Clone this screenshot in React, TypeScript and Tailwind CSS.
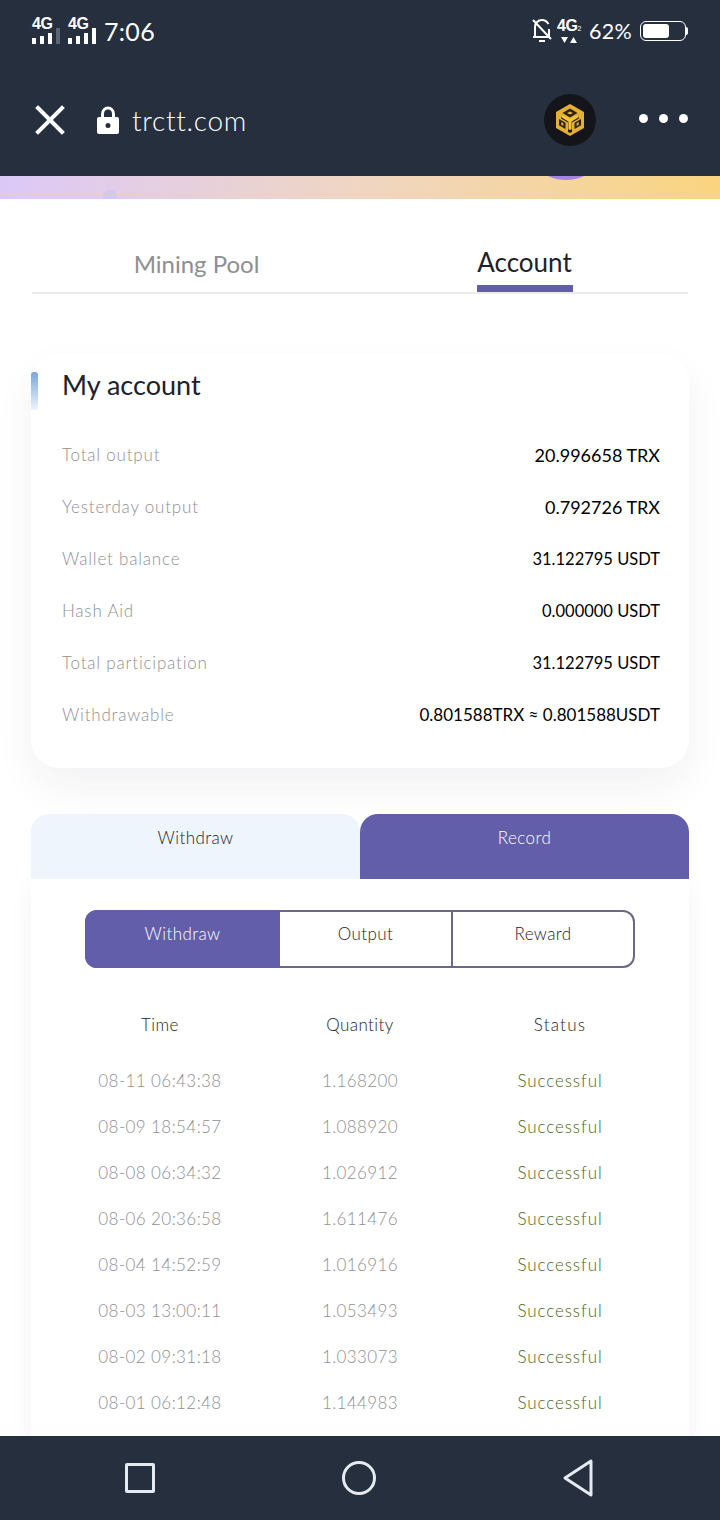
const accountRows = [
  { label: 'Total output', value: '20.996658 TRX', size: 'text-[18px]' },
  { label: 'Yesterday output', value: '0.792726 TRX', size: 'text-[18px]' },
  { label: 'Wallet balance', value: '31.122795 USDT', size: 'text-[16.5px]' },
  { label: 'Hash Aid', value: '0.000000 USDT', size: 'text-[16.5px]' },
  { label: 'Total participation', value: '31.122795 USDT', size: 'text-[16.5px]' },
  { label: 'Withdrawable', value: '0.801588TRX ≈ 0.801588USDT', size: 'text-[17px]' },
]

const records = [
  { time: '08-11 06:43:38', quantity: '1.168200' },
  { time: '08-09 18:54:57', quantity: '1.088920' },
  { time: '08-08 06:34:32', quantity: '1.026912' },
  { time: '08-06 20:36:58', quantity: '1.611476' },
  { time: '08-04 14:52:59', quantity: '1.016916' },
  { time: '08-03 13:00:11', quantity: '1.053493' },
  { time: '08-02 09:31:18', quantity: '1.033073' },
  { time: '08-01 06:12:48', quantity: '1.144983' },
]

function SignalBars({ lastDim }: { lastDim?: boolean }) {
  return (
    <div className="relative w-[28px] h-[26px] flex items-end gap-[4px]">
      <span className="absolute left-0 -top-[1px] text-[16px] leading-[14px] font-bold text-white font-['Liberation_Sans',sans-serif] tracking-[-0.5px]">4G</span>
      <span className="w-[4px] h-[6px] bg-white" />
      <span className="w-[4px] h-[8px] bg-white" />
      <span className="w-[4px] h-[11px] bg-white" />
      <span className={`w-[4px] h-[16px] ${lastDim ? 'bg-[#5b6470]' : 'bg-white'}`} />
    </div>
  )
}

function BnbLogo() {
  return (
    <div className="w-[52px] h-[52px] rounded-full bg-[#14151a] flex items-center justify-center">
      <svg width="34" height="36" viewBox="0 0 34 36" fill="none">
        <path d="M17 2 L31 10 V26 L17 34 L3 26 V10 Z" fill="#e3b032" />
        <path d="M17 6.5 L24.5 11 L17 15.5 L9.5 11 Z" fill="#2a2118" />
        <path d="M17 9.5 L20 11 L17 12.6 L14 11 Z" fill="#e3b032" />
        <path d="M8 14.5 L17 19.5 L26 14.5 V16.5 L19 20.5 V30 L17 31 L15 30 V20.5 L8 16.5 Z" fill="#2a2118" />
        <path d="M11 13.2 L17 16.7 L23 13.2 L26 15 L18.6 19.4 V27 L17 28 L15.4 27 V19.4 L8 15 Z" fill="#f7c52b" />
        <path d="M6 17 L12.5 20.8 V27 L6 23.2 Z M28 17 L21.5 20.8 V27 L28 23.2 Z" fill="#2a2118" />
        <path d="M8.2 20 L10.4 21.3 V24 L8.2 22.7 Z M25.8 20 L23.6 21.3 V24 L25.8 22.7 Z" fill="#e3b032" />
      </svg>
    </div>
  )
}

export default function App() {
  return (
    <div className="w-[720px] h-[1520px] flex flex-col overflow-hidden bg-white font-['Lato',sans-serif]">
      {/* Status bar + browser bar */}
      <div className="h-[176px] shrink-0 bg-[#252f3e] text-white flex flex-col">
        <div className="h-[62px] px-[32px] pt-[17px] flex justify-between items-start">
          <div className="flex items-center gap-[8px]">
            <SignalBars lastDim />
            <SignalBars />
            <span className="text-[25px] leading-[28px] font-normal tracking-[0.3px]">7:06</span>
          </div>
          <div className="flex items-center">
            <svg width="22" height="26" viewBox="0 0 22 26" fill="none" stroke="white" strokeWidth="2" className="mr-[3px]">
              <path d="M4 19 V9 C4 5 7 2 11 2 C14 2 16 3.5 17.5 6 M18 11 V19 H2 M8 23 H14 M2 2 L20 21" />
            </svg>
            <div className="flex flex-col items-center w-[26px] mr-[7px]">
              <span className="text-[16px] leading-[15px] font-bold font-['Liberation_Sans',sans-serif] tracking-[-0.5px]">4G<span className="text-[7px] font-normal">2</span></span>
              <svg width="16" height="8" viewBox="0 0 16 8" fill="white">
                <path d="M0 1 H7 L3.5 7 Z M9 7 H16 L12.5 1 Z" />
              </svg>
            </div>
            <span className="text-[21.5px] leading-[28px] tracking-[0.3px] mr-[8px]">62%</span>
            <div className="w-[46px] h-[20px] rounded-[6px] border border-white p-[2px]">
              <div className="w-[26px] h-full rounded-[3px] bg-white" />
            </div>
            <span className="w-[2px] h-[8px] bg-white rounded-r-full" />
          </div>
        </div>
        <div className="flex-1 pl-[35px] pr-[32px] pt-[2px] flex items-center">
          <svg width="30" height="30" viewBox="0 0 30 30" stroke="white" strokeWidth="4" strokeLinecap="square" className="mr-[32px]">
            <path d="M3 3 L27 27 M27 3 L3 27" />
          </svg>
          <svg width="22" height="28" viewBox="0 0 22 28" className="mr-[13px]">
            <path d="M5.5 12 V8 C5.5 4.5 8 2 11 2 C14 2 16.5 4.5 16.5 8 V12" fill="none" stroke="white" strokeWidth="3" />
            <rect y="11" width="22" height="17" rx="2" fill="white" />
            <circle cx="11" cy="19.5" r="2.5" fill="#252f3e" />
          </svg>
          <span className="text-[28px] leading-[32px] font-light tracking-[0.7px] flex-1">trctt.com</span>
          <div className="mr-[43px]">
            <BnbLogo />
          </div>
          <div className="flex gap-[11px] -mt-[4px]">
            <span className="w-[9px] h-[9px] rounded-full bg-white" />
            <span className="w-[9px] h-[9px] rounded-full bg-white" />
            <span className="w-[9px] h-[9px] rounded-full bg-white" />
          </div>
        </div>
      </div>

      {/* Banner strip */}
      <div className="relative h-[23px] shrink-0 overflow-hidden bg-gradient-to-r from-[#dcc8f8] via-[#f0d6c2] to-[#fad47e]">
        <span className="absolute left-[542px] -top-[20px] w-[48px] h-[24px] rounded-[50%] bg-[#a583e8]" />
        <span className="absolute left-[103px] top-[14px] w-[14px] h-[14px] rounded-full bg-[#cfc8f2]" />
        <span className="absolute left-0 right-0 top-[18px] h-px bg-[#f6c8b4]/60" />
      </div>

      <div className="flex-1 min-h-0 overflow-hidden">
        {/* Top tabs */}
        <div className="mx-[32px] h-[95px] border-b-2 border-[#ebebeb] flex">
          <div className="w-[329px] flex justify-center pt-[50px]">
            <span className="text-[24px] leading-[30px] text-[#8e8e93]">Mining Pool</span>
          </div>
          <div className="flex-1 flex justify-center items-start">
            <div className="w-[96px] h-[93px] border-b-[7px] border-[#635eaa] flex justify-center pt-[48px]">
              <span className="text-[26px] leading-[30px] text-[#20212b]">Account</span>
            </div>
          </div>
        </div>

        {/* My account card */}
        <div className="relative mx-[31px] mt-[60px] h-[414px] rounded-[28px] bg-white shadow-[0_18px_40px_rgba(40,40,60,0.06)] pl-[31px] pr-[29px] pt-[13px]">
          <span className="absolute left-0 top-[18px] w-[7px] h-[38px] rounded-t-[3px] bg-gradient-to-b from-[#7aa6d8] to-[#eef5fb]" />
          <div className="text-[27px] leading-[36px] text-[#20212b]">My account</div>
          <div className="mt-[38px] flex flex-col">
            {accountRows.map((row) => (
              <div key={row.label} className="h-[52px] flex justify-between items-start pt-[2px]">
                <span className="text-[17px] leading-[24px] font-light text-[#8f8f95] tracking-[0.8px]">{row.label}</span>
                <span className={`${row.size} leading-[24px] text-black`}>{row.value}</span>
              </div>
            ))}
          </div>
        </div>

        {/* Withdraw / Record */}
        <div className="mx-[31px] mt-[46px] flex h-[65px]">
          <div className="w-[329px] rounded-t-[18px] bg-[#eff5fd] flex justify-center pt-[13px]">
            <span className="text-[17px] leading-[22px] font-light text-[#1c1d26] tracking-[0.4px]">Withdraw</span>
          </div>
          <div className="w-[329px] rounded-t-[18px] bg-[#635eaa] flex justify-center pt-[13px]">
            <span className="text-[17px] leading-[22px] font-light text-white tracking-[0.4px]">Record</span>
          </div>
        </div>

        <div className="mx-[31px] bg-white shadow-[0_8px_24px_rgba(40,40,60,0.05)] pt-[31px] h-[600px]">
          <div className="mx-[54px] h-[58px] flex rounded-[12px] border-2 border-[#6b6889]">
            <div className="w-[195px] -my-[2px] -ml-[2px] rounded-l-[12px] bg-[#635eaa] flex justify-center pt-[13px]">
              <span className="text-[17px] leading-[22px] font-light text-white tracking-[0.4px]">Withdraw</span>
            </div>
            <div className="w-[173px] border-r-2 border-[#6b6889] flex justify-center pt-[11px]">
              <span className="text-[17px] leading-[22px] font-light text-[#1c1d26] tracking-[0.4px]">Output</span>
            </div>
            <div className="flex-1 flex justify-center pt-[11px]">
              <span className="text-[17px] leading-[22px] font-light text-[#1c1d26] tracking-[0.4px]">Reward</span>
            </div>
          </div>

          <div className="mx-[29px] mt-[34px] grid grid-cols-3 h-[46px] text-center text-[17px] leading-[46px] font-light text-[#1c1d26] tracking-[0.4px]">
            <span>Time</span>
            <span>Quantity</span>
            <span className="tracking-[1.2px]">Status</span>
          </div>
          <div className="mx-[29px] mt-[10px]">
            {records.map((r) => (
              <div key={r.time} className="grid grid-cols-3 h-[46px] text-center text-[17px] leading-[46px] font-light tracking-[0.4px]">
                <span className="text-[#8f8f95]">{r.time}</span>
                <span className="text-[#8f8f95]">{r.quantity}</span>
                <span className="text-[#4d6418] tracking-[0.9px]">Successful</span>
              </div>
            ))}
          </div>
        </div>
      </div>

      {/* Android nav bar */}
      <div className="h-[84px] shrink-0 bg-[#252f3e] flex items-center justify-center">
        <div className="w-[470px] flex justify-between items-center">
          <span className="w-[30px] h-[30px] rounded-[2px] border-[3px] border-[#e6ebf2]" />
          <span className="w-[34px] h-[34px] rounded-full border-[3px] border-[#e6ebf2]" />
          <svg width="30" height="38" viewBox="0 0 30 38" fill="none" stroke="#e6ebf2" strokeWidth="3" strokeLinejoin="round" className="mr-[2px]">
            <path d="M28 2 V36 L2 19 Z" />
          </svg>
        </div>
      </div>
    </div>
  )
}
